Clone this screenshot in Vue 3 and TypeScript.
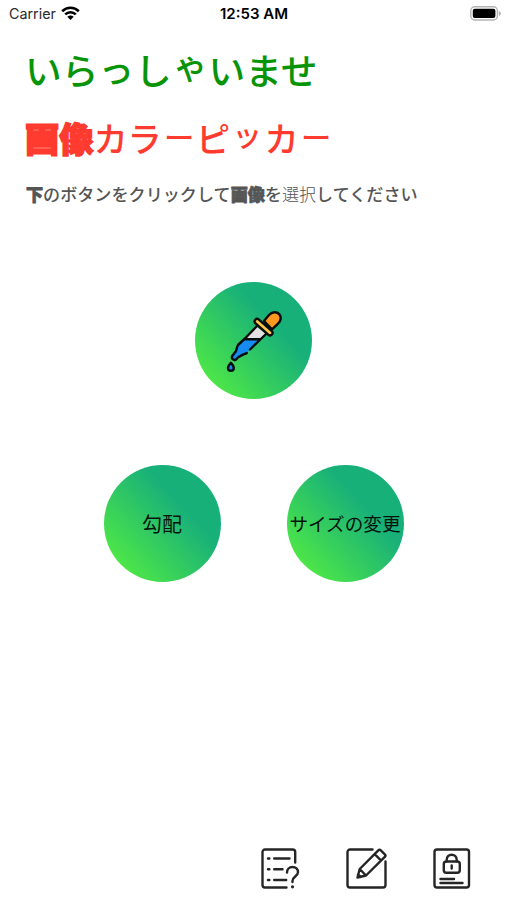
<script setup lang="ts">
interface Glyph {
  text: string
  kind?: string
}

const greeting: Glyph[] = [
  { text: 'いら' },
  { text: 'っ', kind: 'small lifted' },
  { text: 'し' },
  { text: 'ゃ', kind: 'small raised' },
  { text: 'いませ' },
]
const title: Glyph[] = [
  { text: '画像', kind: 'heavy' },
  { text: 'カラ' },
  { text: 'ー', kind: 'bar' },
  { text: 'ピ' },
  { text: 'ッ', kind: 'small raised-slightly' },
  { text: 'カ' },
  { text: 'ー', kind: 'bar' },
]
const hint: Glyph[] = [
  { text: '下', kind: 'heavy' },
  { text: 'のボタンをクリックして' },
  { text: '画像', kind: 'heavy' },
  { text: 'を' },
  { text: '選択', kind: 'light' },
  { text: 'してください' },
]
</script>

<template>
  <div class="screen">
    <header class="status">
      <div class="carrier">
        <span>Carrier</span>
        <svg class="wifi" width="19" height="15" viewBox="0 0 19 15">
          <g fill="none" stroke="#000" stroke-width="2.7">
            <path d="M1.2 5.2C5.8.6 13.2.6 17.8 5.2" />
            <path d="M4.2 8.4c3-2.9 7.6-2.9 10.6 0" />
          </g>
          <path d="M6.3 10.8c1.8-1.7 4.6-1.7 6.4 0L9.5 14z" />
        </svg>
      </div>
      <time class="clock">12:53 AM</time>
      <svg class="battery" width="32" height="15" viewBox="0 0 32 15">
        <rect x=".8" y=".8" width="26.6" height="13.2" rx="4" fill="#fff" stroke="#b4b4b4" stroke-width="1.4" />
        <rect x="2.8" y="2.8" width="22.6" height="9.2" rx="2" />
        <path d="M28.8 5v4.800c1.600-.6 2.100-1.400 2.100-2.400S30.400 5.600 28.800 5z" fill="#b4b4b4" />
      </svg>
    </header>

    <section class="intro">
      <h1 class="greeting"><span v-for="(g, i) in greeting" :key="i" :class="g.kind">{{ g.text }}</span></h1>
      <h2 class="title"><span v-for="(g, i) in title" :key="i" :class="g.kind">{{ g.text }}</span></h2>
      <p class="hint"><span v-for="(g, i) in hint" :key="i" :class="g.kind">{{ g.text }}</span></p>
    </section>

    <main class="actions">
      <button class="round" type="button">
        <svg class="dropper" width="72" height="80" viewBox="0 0 72 80" stroke="#080c0c" stroke-width="2.4" stroke-linejoin="round" stroke-linecap="round">
          <path d="M27 38.500 38.500 25.500 48 33 42 38.500z" fill="#e2e2e2" stroke="none" />
          <path d="M27 38.300h15.500L32 48.500l-3 3.500-5.500 2.500-4.500 3.500c-2.600 1.200-5.500-.7-4.400-3.300l3.400-4.700 1-5z" fill="#168bf2" stroke="none" />
          <path d="M38.500 25.500 27 37.500 20 44c-1.500 2.500-1 4.500-2.500 6.800l-3.300 4.200c-1.200 2.600 1.200 4.800 3.800 3.600 3-3.800 6-4.400 10.700-6.500M32 48.500 48 33M28 38.300H42" fill="none" />
          <path d="m46 20 5-6c3-3.400 7.700-3.700 10.200-.9 2.500 2.900 1.900 6.900-1.400 9.700L54 28.300z" fill="#ff9820" />
          <path d="M37.300 18.700c1.200-1.300 2.700-.9 3.900.1l12.400 11c1.200 1.100 1.300 2.500.3 3.700-1.100 1.200-2.500 1.100-3.700.1L37.600 22.500c-1.200-1.100-1.300-2.500-.3-3.800z" fill="#ffc64b" />
          <path d="M12.900 61.700c-2 2.300-2.900 3.900-2.900 5.200 0 1.800 1.200 2.900 2.900 2.900s2.900-1.100 2.900-2.900c0-1.300-.9-2.900-2.900-5.200z" fill="#168bf2" />
        </svg>
      </button>
      <div class="pair">
        <button class="round gradient-label" type="button">勾配</button>
        <button class="round resize-label" type="button">サイズの変更</button>
      </div>
    </main>

    <nav class="tools">
      <svg width="40" height="42" viewBox="0 0 40 42">
        <path d="M34.200 14.500V4a2.500 2.500 0 0 0-2.500-2.500H4A2.500 2.500 0 0 0 1.500 4v33A2.500 2.500 0 0 0 4 39.500h21.500M7 10.500h1.400m4.800 0h15.300M7 21.300h1.400m4.800 0h8.300M7 32h1.400m4.800 0h12M26 24.500c0-3.200 2.200-5.500 5.500-5.500s5.500 2.200 5.500 5.200c0 3.900-5.500 4.700-5.500 8.500V34" />
        <circle cx="31.500" cy="38.800" r="1.600" />
      </svg>
      <svg width="40" height="42" viewBox="0 0 40 42">
        <path d="M26.500 1.500H4A2.500 2.500 0 0 0 1.500 4v33A2.500 2.500 0 0 0 4 39.500h33A2.500 2.500 0 0 0 39.500 37V13.500M11.500 29.500l2.200-8.500L32.300 2.300c.8-.8 1.700-.8 2.500 0l4 4c.8.8.8 1.700 0 2.500L20 27.500zM13.700 21 20 27.500M28.700 6.200l6.200 6.200M12 26.500l2.800 2.500" />
      </svg>
      <svg width="38" height="42" viewBox="0 0 38 42">
        <rect x="1.500" y="1.500" width="34.500" height="38" rx="2.500" />
        <rect x="10.800" y="13.500" width="16" height="11.300" rx="2.500" />
        <path d="M13.700 13.300v-1.500c0-6.800 10-6.800 10 0v1.500M18.700 17.500v3M7.500 31h13.500M7.500 35h22" />
      </svg>
    </nav>
  </div>
</template>

<style>
body {
  background: #fff;
}
</style>

<style scoped>
.screen {
  box-sizing: border-box;
  height: 900px;
  display: flex;
  flex-direction: column;
  overflow: hidden;
  background: #fff;
  font-family: "Noto Sans CJK JP", sans-serif;
}

.status {
  display: grid;
  grid-template-columns: 1fr auto 1fr;
  align-items: center;
  height: 27px;
  padding: 0 5px 0 9px;
  font: 15px/27px Inter, sans-serif;
  color: #111;
}

.carrier {
  display: flex;
  align-items: center;
  gap: 5px;
  font-size: 14.3px;
  color: #2a2a2a;
}

.clock {
  margin-right: 3px;
  font-size: 15px;
  font-weight: 600;
  color: #000;
}

.battery {
  justify-self: end;
}

.intro {
  padding: 16px 26px 0;
  white-space: nowrap;
}

.greeting {
  height: 52px;
  margin: 0 0 0 -1px;
  font-size: 36.7px;
  line-height: 52px;
  font-weight: 500;
  color: #079407;
}

.title {
  height: 50px;
  margin: 17px 0 0 -1px;
  font-size: 34.2px;
  line-height: 50px;
  font-weight: 500;
  color: #ff3b30;
}

.hint {
  height: 26px;
  margin: 19px 0 0;
  font-size: 17.1px;
  line-height: 26px;
  font-weight: 500;
  color: #555;
}

.heavy {
  font-weight: 900;
  -webkit-text-stroke: 0.045em currentColor;
  stroke-linejoin: round;
}

.light {
  font-weight: 300;
}

.small,
.bar {
  display: inline-block;
}

.lifted {
  transform: translateY(-2px) scale(0.97);
}

.raised {
  transform: translateY(-5px) scale(0.93);
}

.raised-slightly {
  transform: translateY(-4px) scale(0.87);
}

.bar {
  font-weight: 400;
  transform: translateY(-1px) scaleX(0.9);
}

.actions {
  display: flex;
  flex-direction: column;
  align-items: center;
  gap: 66px;
  margin-top: 75px;
}

.pair {
  display: flex;
  gap: 66px;
}

.round {
  box-sizing: border-box;
  display: flex;
  align-items: center;
  justify-content: center;
  width: 117px;
  height: 117px;
  padding: 0;
  border: 0;
  border-radius: 50%;
  background: linear-gradient(47deg, #4de648 14%, #18b079 66%);
  color: #06140c;
  font-family: inherit;
  white-space: nowrap;
}

.gradient-label {
  font-size: 20px;
}

.resize-label {
  padding-bottom: 2px;
  font-size: 18.6px;
}

.tools {
  display: flex;
  justify-content: flex-end;
  gap: 46px;
  margin-top: auto;
  padding: 0 36px 10px 0;
}

.tools svg {
  overflow: visible;
  fill: none;
  stroke: #252525;
  stroke-width: 2.4;
  stroke-linecap: round;
  stroke-linejoin: round;
}

.tools svg:nth-child(2) {
  margin: 0 1px 0 -1px;
}

.tools circle {
  fill: #252525;
  stroke: none;
}
</style>
